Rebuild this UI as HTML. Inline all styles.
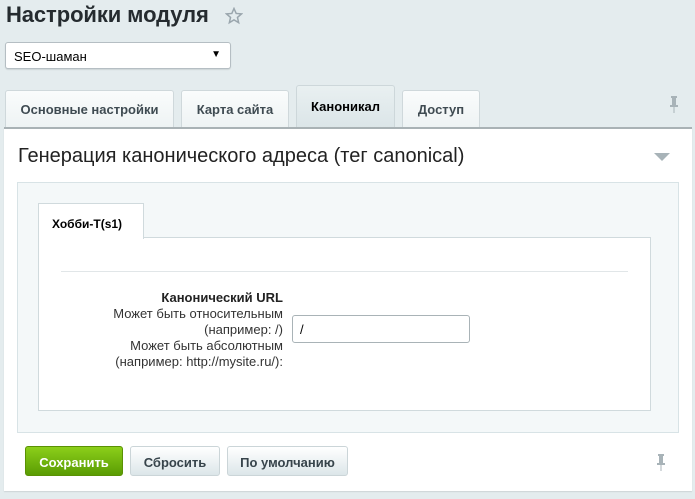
<!DOCTYPE html>
<html><head><meta charset="utf-8"><style>
*{box-sizing:border-box;margin:0;padding:0}
body{width:695px;height:499px;background:#e4ecee;font-family:"Liberation Sans",Arial,sans-serif;position:relative;overflow:hidden;color:#000}
.a{position:absolute}
.title{left:6px;top:2px;font-size:22px;font-weight:bold;color:#252b2f;letter-spacing:-0.1px}
.sel{left:5px;top:42px;width:226px;height:27px;background:#fff;border:1px solid #b5bec3;border-radius:3px;font-size:13px;padding:6px 8px;box-shadow:0 1px 1px rgba(0,0,0,.1)}
.tab{top:90px;height:37px;background:linear-gradient(#fafcfc,#eef3f4);border:1px solid #cfd8db;border-bottom:none;border-radius:3px 3px 0 0;font-size:13px;font-weight:bold;color:#3f4b52;text-align:center;padding-top:11px}
.tab.act{top:85px;height:43px;background:linear-gradient(#e9f0f1,#dbe5e8);color:#000;padding-top:13px;border-color:#cdd7da}
.panel{left:4px;top:127px;width:688px;height:364px;background:#fff;border-top:2px solid #a9b2b5;box-shadow:0 1px 1px rgba(0,0,0,.1)}
.btn{top:446px;height:30px;border-radius:3px;font-size:13px;font-weight:bold;text-align:center;padding-top:8px}
.g{background:linear-gradient(#8ccf1a,#5a9c03);color:#fff;border:1px solid #5a9104}
.w{background:linear-gradient(#fff,#dce6e9);color:#37444b;border:1px solid #cbd5d8}
.lab{font-size:13px;line-height:16px;color:#333;text-align:right;left:40px;width:243px;top:290px}
</style></head><body>
<div class="a title">Настройки модуля</div>
<svg class="a" style="left:225px;top:7px" width="18" height="18" viewBox="0 0 24 24"><path d="M12 2l2.9 6.6 7.1.6-5.4 4.7 1.6 7-6.2-3.7-6.2 3.7 1.6-7L2 9.2l7.1-.6z" fill="none" stroke="#9aa6ad" stroke-width="2"/></svg>
<div class="a sel">SEO-шаман<span style="position:absolute;right:9px;top:6px;font-size:10px">▼</span></div>
<div class="a tab" style="left:5px;width:169px">Основные настройки</div>
<div class="a tab" style="left:181px;width:108px">Карта сайта</div>
<div class="a tab act" style="left:296px;width:99px">Каноникал</div>
<div class="a tab" style="left:402px;width:78px">Доступ</div>
<svg class="a" style="left:669px;top:96px" width="10" height="18" viewBox="0 0 10 18"><rect x="2" y="0" width="6" height="2" fill="#a8b3b8"/><rect x="3" y="2" width="4" height="7" fill="#a8b3b8"/><rect x="1" y="9" width="8" height="2" fill="#a8b3b8"/><rect x="4.5" y="11" width="1" height="6" fill="#a8b3b8"/></svg>
<div class="a panel"></div>
<div class="a" style="left:18px;top:145px;font-size:20px;color:#222">Генерация канонического адреса (тег canonical)</div>
<div class="a" style="left:654px;top:153px;width:0;height:0;border-left:8px solid transparent;border-right:8px solid transparent;border-top:8px solid #a8b3b8"></div>
<div class="a" style="left:17px;top:182px;width:662px;height:251px;background:#f4f8f9;border:1px solid #d8e3e6"></div>
<div class="a" style="left:38px;top:237px;width:613px;height:174px;background:#fff;border:1px solid #d0dadd"></div>
<div class="a" style="left:38px;top:203px;width:106px;height:36px;background:#fff;border:1px solid #d0dadd;border-bottom:none;font-size:12px;font-weight:bold;padding:13px 0 0 13px">Хобби-T(s1)</div>
<div class="a" style="left:61px;top:271px;width:567px;height:1px;background:#e1e6e8"></div>
<div class="a lab"><b style="color:#222">Канонический URL</b><br>Может быть относительным<br>(например: /)<br>Может быть абсолютным<br>(например: http://mysite.ru/):</div>
<div class="a" style="left:292px;top:315px;width:178px;height:28px;border:1px solid #a9b3b7;border-radius:3px;background:#fff;font-size:13px;padding:6px 7px">/</div>
<div class="a btn g" style="left:25px;width:98px">Сохранить</div>
<div class="a btn w" style="left:130px;width:90px">Сбросить</div>
<div class="a btn w" style="left:227px;width:121px">По умолчанию</div>
<svg class="a" style="left:656px;top:454px" width="10" height="18" viewBox="0 0 10 18"><rect x="2" y="0" width="6" height="2" fill="#a8b3b8"/><rect x="3" y="2" width="4" height="7" fill="#a8b3b8"/><rect x="1" y="9" width="8" height="2" fill="#a8b3b8"/><rect x="4.5" y="11" width="1" height="6" fill="#a8b3b8"/></svg>
</body></html>
